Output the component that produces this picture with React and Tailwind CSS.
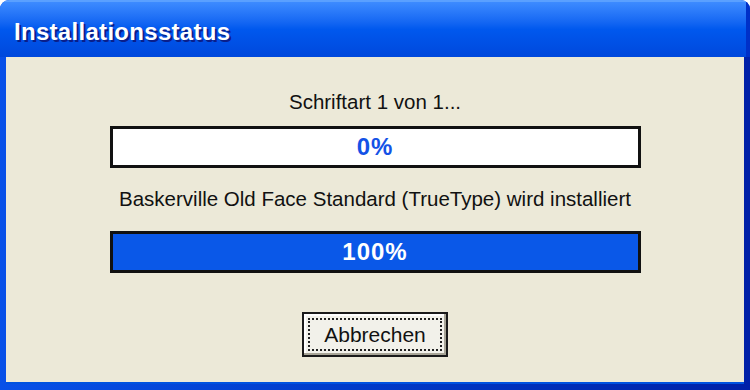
export default function App() {
  return (
    <div className="w-[750px] h-[390px] bg-white">
      <div
        className="w-full h-full flex flex-col rounded-t-[9px] overflow-hidden bg-[#0a4ee4]"
        style={{ fontFamily: '"Liberation Sans", Arial, sans-serif' }}
      >
        {/* Title bar */}
        <div className="h-[57px] shrink-0 flex items-center pl-[14px] pt-[4px] bg-gradient-to-b from-[#3d8bff] via-[#0058ee] to-[#0048dc] border-t-2 border-[#5aa0ff] border-r-4 border-r-[#0030c8]">
          <span className="text-white font-bold text-[24px] tracking-[0.3px] [text-shadow:2px_2px_0_#0a1e8a]">
            Installationsstatus
          </span>
        </div>

        {/* Body */}
        <div className="flex-1 flex pl-[6px] pr-[6px] pb-[6px] bg-gradient-to-r from-[#0850e8] to-[#0020a8]">
          <div className="flex-1 flex flex-col items-center bg-[#ece9d8] border-b-2 border-[#0052e0] text-[20.5px] text-[#111]">
            <div className="mt-[31px] h-[28px] flex items-center">Schriftart 1 von 1...</div>
            <div className="mt-[10px] w-[531px] h-[42px] bg-white border-[3px] border-[#111] flex items-center justify-center">
              <span className="font-bold text-[24px] tracking-[1px] text-[#1452e6]">0%</span>
            </div>
            <div className="mt-[17px] h-[28px] flex items-center">
              Baskerville Old Face Standard (TrueType) wird installiert
            </div>
            <div className="mt-[18px] w-[531px] h-[42px] bg-[#0a58e8] border-[3px] border-[#111] flex items-center justify-center">
              <span className="font-bold text-[24px] tracking-[1px] text-white">100%</span>
            </div>
            <button className="mt-[39px] w-[146px] h-[45px] bg-[#f2f1ea] border-2 border-[#1a1a1a] p-[4px] shadow-[inset_-2px_-2px_0_#a8a597,inset_2px_2px_0_#fff]">
              <div className="w-full h-full border-2 border-dotted border-[#222] flex items-center justify-center text-[21px] text-[#111]">
                Abbrechen
              </div>
            </button>
          </div>
        </div>
      </div>
    </div>
  );
}
